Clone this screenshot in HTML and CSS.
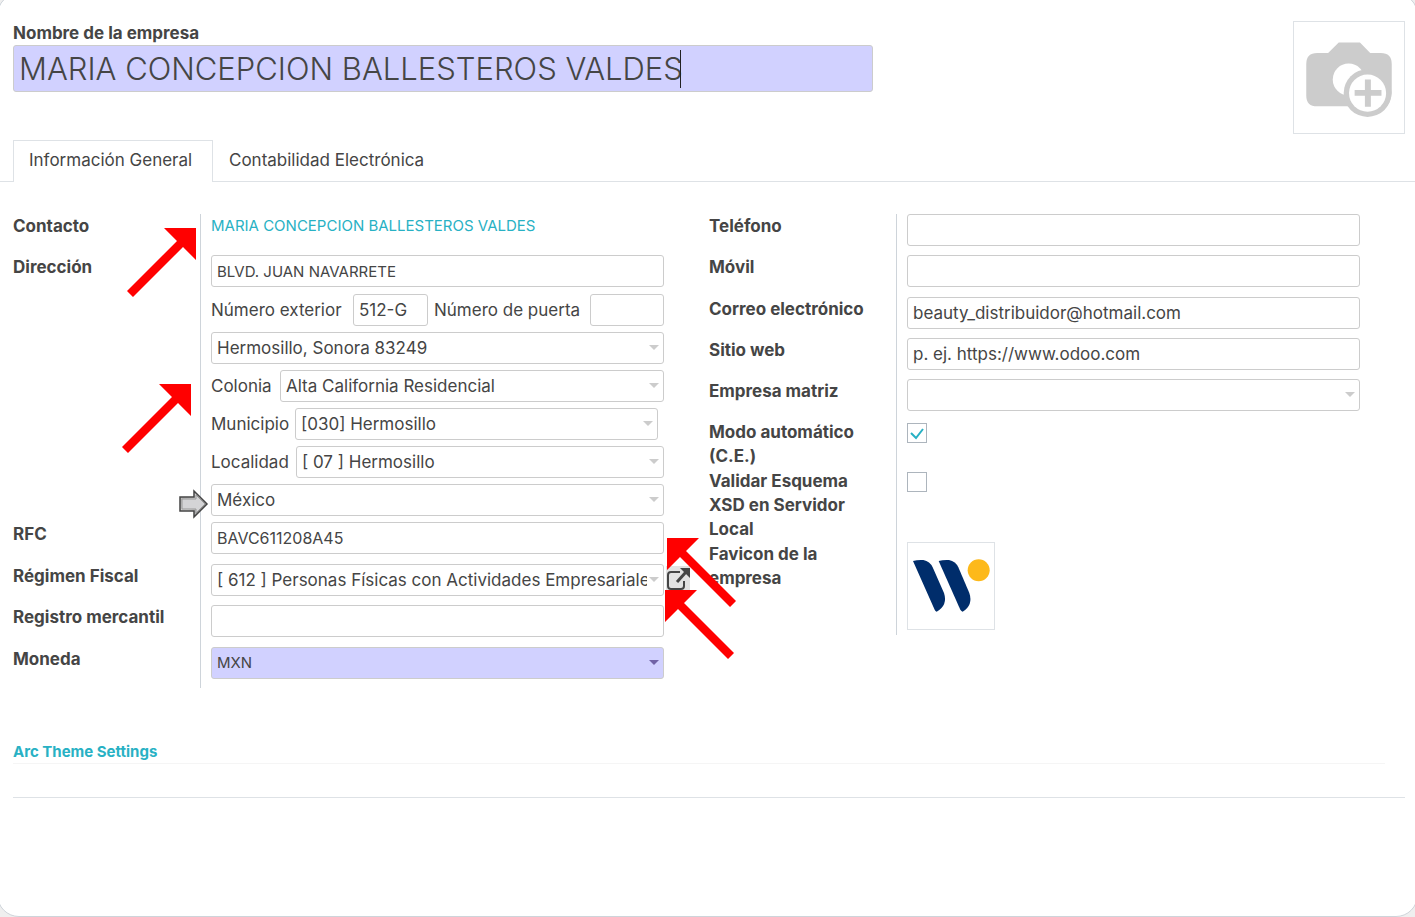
FILE: index.html
```html
<!DOCTYPE html>
<html lang="es">
<head>
<meta charset="utf-8">
<title>Empresa</title>
<link rel="stylesheet" href="styles.css">
</head>
<body>
<main class="sheet">
  <header class="head">
    <div class="company">
      <label class="label" for="name">Nombre de la empresa</label>
      <div class="name-box">
        <input class="name-input" id="name" type="text" value="MARIA CONCEPCION BALLESTEROS VALDES">
        <span class="text-cursor"></span>
      </div>
    </div>
    <button class="photo" type="button" aria-label="Subir logotipo">
      <svg viewBox="86 66 332 334" aria-hidden="true">
        <path fill="#ccc" d="M156 159H189L221 127H285L316 159H348Q381 159 381 192V280A73 73 0 0 1 250 320H156Q123 320 123 287V192Q123 159 156 159Z"/>
        <circle cx="251" cy="239" r="48" fill="#fff"/>
        <circle cx="308" cy="280" r="72" fill="#ccc"/>
        <circle cx="308" cy="280" r="56" fill="#fff"/>
        <path fill="#ccc" d="M300 239H318V271H350V288H318V321H300V288H269V271H300Z"/>
      </svg>
    </button>
  </header>

  <nav class="tabs">
    <a class="tab tab-active" href="#general">Información General</a>
    <a class="tab" href="#contabilidad">Contabilidad Electrónica</a>
  </nav>

  <section class="groups" id="general">
    <div class="group">
      <div class="row">
        <span class="label">Contacto</span>
        <div class="value"><a class="link" href="#contacto">MARIA CONCEPCION BALLESTEROS VALDES</a></div>
      </div>
      <div class="row">
        <label class="label" for="street">Dirección</label>
        <div class="value address">
          <input class="field field-caps street" id="street" type="text" value="BLVD. JUAN NAVARRETE">
          <div class="line line-numbers">
            <label for="ext">Número exterior</label>
            <input class="field" id="ext" type="text" value="512-G">
            <label for="door">Número de puerta</label>
            <input class="field" id="door" type="text">
          </div>
          <div class="pick"><select class="field" aria-label="Ciudad"><option>Hermosillo, Sonora 83249</option></select></div>
          <div class="line line-colony">
            <label for="colony">Colonia</label>
            <div class="pick"><select class="field" id="colony"><option>Alta California Residencial</option></select></div>
          </div>
          <div class="line line-town">
            <label for="town">Municipio</label>
            <div class="pick"><select class="field" id="town"><option>[030] Hermosillo</option></select></div>
          </div>
          <div class="line line-locality">
            <label for="locality">Localidad</label>
            <div class="pick"><select class="field" id="locality"><option>[ 07 ] Hermosillo</option></select></div>
          </div>
          <div class="pick"><select class="field" aria-label="País"><option>México</option></select></div>
        </div>
      </div>
      <div class="row row-tall">
        <label class="label" for="rfc">RFC</label>
        <div class="value"><input class="field field-code" id="rfc" type="text" value="BAVC611208A45"></div>
      </div>
      <div class="row">
        <label class="label" for="regimen">Régimen Fiscal</label>
        <div class="value">
          <div class="pick"><select class="field" id="regimen"><option>[ 612 ] Personas Físicas con Actividades Empresariale</option></select></div>
          <button class="open" type="button" aria-label="Abrir registro">
            <svg viewBox="0 0 24 26" aria-hidden="true">
              <path d="M14 6H5Q2 6 2 9V20Q2 23 5 23H15Q18 23 18 20V15" fill="none" stroke="#454545" stroke-width="2"/>
              <path d="M11 16L20 6" stroke="#454545" stroke-width="3"/>
              <path d="M14 2H24V12Z" fill="#454545"/>
            </svg>
          </button>
        </div>
      </div>
      <div class="row row-tall">
        <label class="label" for="registro">Registro mercantil</label>
        <div class="value"><input class="field" id="registro" type="text"></div>
      </div>
      <div class="row">
        <label class="label" for="moneda">Moneda</label>
        <div class="value"><div class="pick pick-required"><select class="field field-caps" id="moneda"><option>MXN</option></select></div></div>
      </div>
    </div>

    <div class="group">
      <div class="row">
        <label class="label" for="tel">Teléfono</label>
        <div class="value"><input class="field" id="tel" type="tel"></div>
      </div>
      <div class="row row-tall">
        <label class="label" for="movil">Móvil</label>
        <div class="value"><input class="field" id="movil" type="tel"></div>
      </div>
      <div class="row">
        <label class="label" for="correo">Correo electrónico</label>
        <div class="value"><input class="field" id="correo" type="email" value="beauty_distribuidor@hotmail.com"></div>
      </div>
      <div class="row">
        <label class="label" for="web">Sitio web</label>
        <div class="value"><input class="field" id="web" type="text" placeholder="p. ej. https://www.odoo.com"></div>
      </div>
      <div class="row">
        <label class="label" for="matriz">Empresa matriz</label>
        <div class="value"><div class="pick"><select class="field" id="matriz"><option></option></select></div></div>
      </div>
      <div class="row row-text">
        <label class="label" for="auto">Modo automático<br>(C.E.)</label>
        <div class="value">
          <span class="tick">
            <input class="check" id="auto" type="checkbox" checked>
            <svg class="tick-mark" viewBox="0 0 20 20" aria-hidden="true"><path d="M4 10L9 15L16 6" fill="none" stroke="#28b1c4" stroke-width="2"/></svg>
          </span>
        </div>
      </div>
      <div class="row row-text">
        <label class="label" for="xsd">Validar Esquema<br>XSD en Servidor<br>Local</label>
        <div class="value"><span class="tick"><input class="check" id="xsd" type="checkbox"></span></div>
      </div>
      <div class="row row-icon">
        <span class="label">Favicon de la<br>empresa</span>
        <div class="value">
          <div class="favicon">
            <svg viewBox="84 430 258 258" role="img" aria-label="Favicon">
              <path fill="#002d6b" d="M99 484Q112 480 130 481Q150 485 158 503L192 580Q204 617 170 636Q166 635 164 630Z"/>
              <path fill="#002d6b" d="M176 484Q189 480 207 481Q227 485 235 503L268 580Q280 617 248 636Q244 635 241 630Z"/>
              <circle cx="296" cy="512" r="33" fill="#fdb91a"/>
            </svg>
          </div>
        </div>
      </div>
    </div>
  </section>

  <h2 class="section-title">Arc Theme Settings</h2>
  <hr class="rule">

  <svg class="mark mark-contact" viewBox="0 0 69 69" aria-hidden="true"><path fill="red" d="M37 0H69V32L56 19L6 69L0 63L50 13Z"/></svg>
  <svg class="mark mark-colony" viewBox="0 0 69 69" aria-hidden="true"><path fill="red" d="M37 0H69V32L56 19L6 69L0 63L50 13Z"/></svg>
  <svg class="mark mark-rfc" viewBox="0 0 69 69" aria-hidden="true"><path fill="red" d="M32 0H0V32L13 19L63 69L69 63L19 13Z"/></svg>
  <svg class="mark mark-regimen" viewBox="0 0 69 69" aria-hidden="true"><path fill="red" d="M32 0H0V32L13 19L63 69L69 63L19 13Z"/></svg>
  <svg class="mark mark-country" viewBox="0 0 30 30" aria-hidden="true">
    <defs><linearGradient id="steel" x1="0" y1="0" x2="1" y2="1"><stop offset="0" stop-color="#aaa"/><stop offset=".5" stop-color="#dcdcdc"/><stop offset="1" stop-color="#777"/></linearGradient></defs>
    <path d="M1 8H15V2L28 15L15 28V22H1Z" fill="url(#steel)" stroke="#444" stroke-width="1.5"/>
    <path d="M3 10H17V6L26 15L17 24V20H3Z" fill="#d4d4d6" stroke="#999" stroke-width="1"/>
  </svg>
</main>
</body>
</html>
```
FILE: styles.css
```css
* { box-sizing: border-box; }

body {
  margin: 0;
  overflow: hidden;
  background: #efefef;
  color: #454545;
  font: 17px/24px Inter, "Noto Sans", sans-serif;
}

input, select, button {
  font: inherit;
  color: inherit;
}

.sheet {
  position: relative;
  min-height: calc(100vh + 7px);
  margin: -7px -3px 0;
  padding: 26px 2px 0;
  background: #fff;
  border: 1px solid #ced4da;
  border-radius: 22px;
}

.head {
  display: flex;
  justify-content: space-between;
  align-items: flex-start;
  padding: 1px 10px 6px 13px;
}

.company {
  flex: 0 1 860px;
}

.company .label {
  display: block;
}

.label {
  font-weight: 700;
}

.group .label {
  line-height: 24px;
}

.name-box {
  position: relative;
}

.name-input {
  display: block;
  width: 100%;
  height: 47px;
  padding: 0 5px;
  border: 1px solid #ccc;
  border-radius: 3px;
  background: #d1d1ff;
  font-size: 31px;
  font-weight: 300;
  outline: none;
}

.text-cursor {
  position: absolute;
  top: 5px;
  left: 667px;
  width: 1px;
  height: 38px;
  background: #222;
}

.photo {
  width: 112px;
  height: 113px;
  padding: 0;
  border: 1px solid #dee2e6;
  background: #fff;
}

.photo svg, .favicon svg, .open svg {
  display: block;
  width: 100%;
  height: 100%;
}

.tabs {
  display: flex;
  padding-left: 13px;
  border-bottom: 1px solid #dee2e6;
}

.tab {
  height: 41px;
  padding: 7px 15px;
  border: 1px solid transparent;
  border-bottom: 0;
  color: inherit;
  text-decoration: none;
}

.tab-active {
  flex: 0 0 200px;
  height: 42px;
  margin-bottom: -1px;
  border-color: #dee2e6;
  background: #fff;
}

.groups {
  display: grid;
  grid-template-columns: 1fr 1fr;
  align-items: start;
  padding: 32px 10px 0 13px;
}

.row {
  display: grid;
  grid-template-columns: 187px 1fr;
}

.value {
  display: grid;
  grid-template-columns: minmax(0, 1fr) 45px;
  align-items: start;
  min-height: 41px;
  padding: 0 0 9px 10px;
  border-left: 1px solid #ced4da;
}

.row-tall .value { padding-bottom: 10px; }
.row-text .value { padding-bottom: 0; }
.row-text .label { padding-bottom: 1px; }
.row-icon .value { padding-bottom: 5px; }

.link {
  color: #28b1c4;
  font-size: 15px;
  text-decoration: none;
}

.field {
  display: block;
  width: 100%;
  height: 32px;
  padding: 0 5px;
  border: 1px solid #ccc;
  border-radius: 3px;
  background: #fff;
  outline: none;
  appearance: none;
}

.field-caps { font-size: 15px; }
.field-code { font-size: 16px; }

.field::placeholder {
  color: #454545;
  opacity: 1;
}

.address {
  gap: 6px 0;
  padding-bottom: 6px;
}

.address > * { grid-column: 1; }

.street { margin-bottom: 1px; }

.line {
  display: grid;
  align-items: center;
  white-space: nowrap;
}

.line-numbers { grid-template-columns: 142px 75px 162px 1fr; }
.line-numbers label + input + label { padding-left: 6px; }
.line-colony { grid-template-columns: 69px 1fr; }
.line-town { grid-template-columns: 84px 1fr; padding-right: 6px; }
.line-locality { grid-template-columns: 85px 1fr; }

.pick { position: relative; }

.pick .field { padding-right: 16px; }

.pick::after {
  content: "";
  position: absolute;
  top: 13px;
  right: 5px;
  border: 5px solid transparent;
  border-top-color: #ccc;
  border-bottom: 0;
  pointer-events: none;
}

.pick-required .field { background: #d1d1ff; }
.pick-required::after { border-top-color: #7163a6; }

.open {
  width: 24px;
  height: 26px;
  margin: 2px 0 0 2px;
  padding: 0;
  border: 0;
  background: #e2e2e2;
}

.tick {
  position: relative;
  width: 20px;
  height: 20px;
  margin-top: 3px;
}

.check {
  display: block;
  width: 20px;
  height: 20px;
  margin: 0;
  border: 1px solid #adb5bd;
  background: #fff;
  appearance: none;
}

.tick-mark {
  position: absolute;
  inset: 0;
  pointer-events: none;
}

.favicon {
  width: 88px;
  height: 88px;
  border: 1px solid #dee2e6;
}

.section-title {
  margin: 52px 30px 0 13px;
  border-bottom: 1px solid #f5f5f5;
  color: #28b1c4;
  font-size: 15px;
  line-height: 23px;
}

.rule {
  margin: 33px 10px 0 13px;
  border: 0;
  border-top: 1px solid #dee2e6;
}

.mark {
  position: absolute;
  width: 69px;
  height: 69px;
  pointer-events: none;
}

.mark-contact { top: 234px; left: 129px; }
.mark-colony { top: 390px; left: 124px; }
.mark-rfc { top: 544px; left: 669px; }
.mark-regimen { top: 596px; left: 667px; }
.mark-country { top: 495px; left: 181px; width: 30px; height: 30px; }
```
